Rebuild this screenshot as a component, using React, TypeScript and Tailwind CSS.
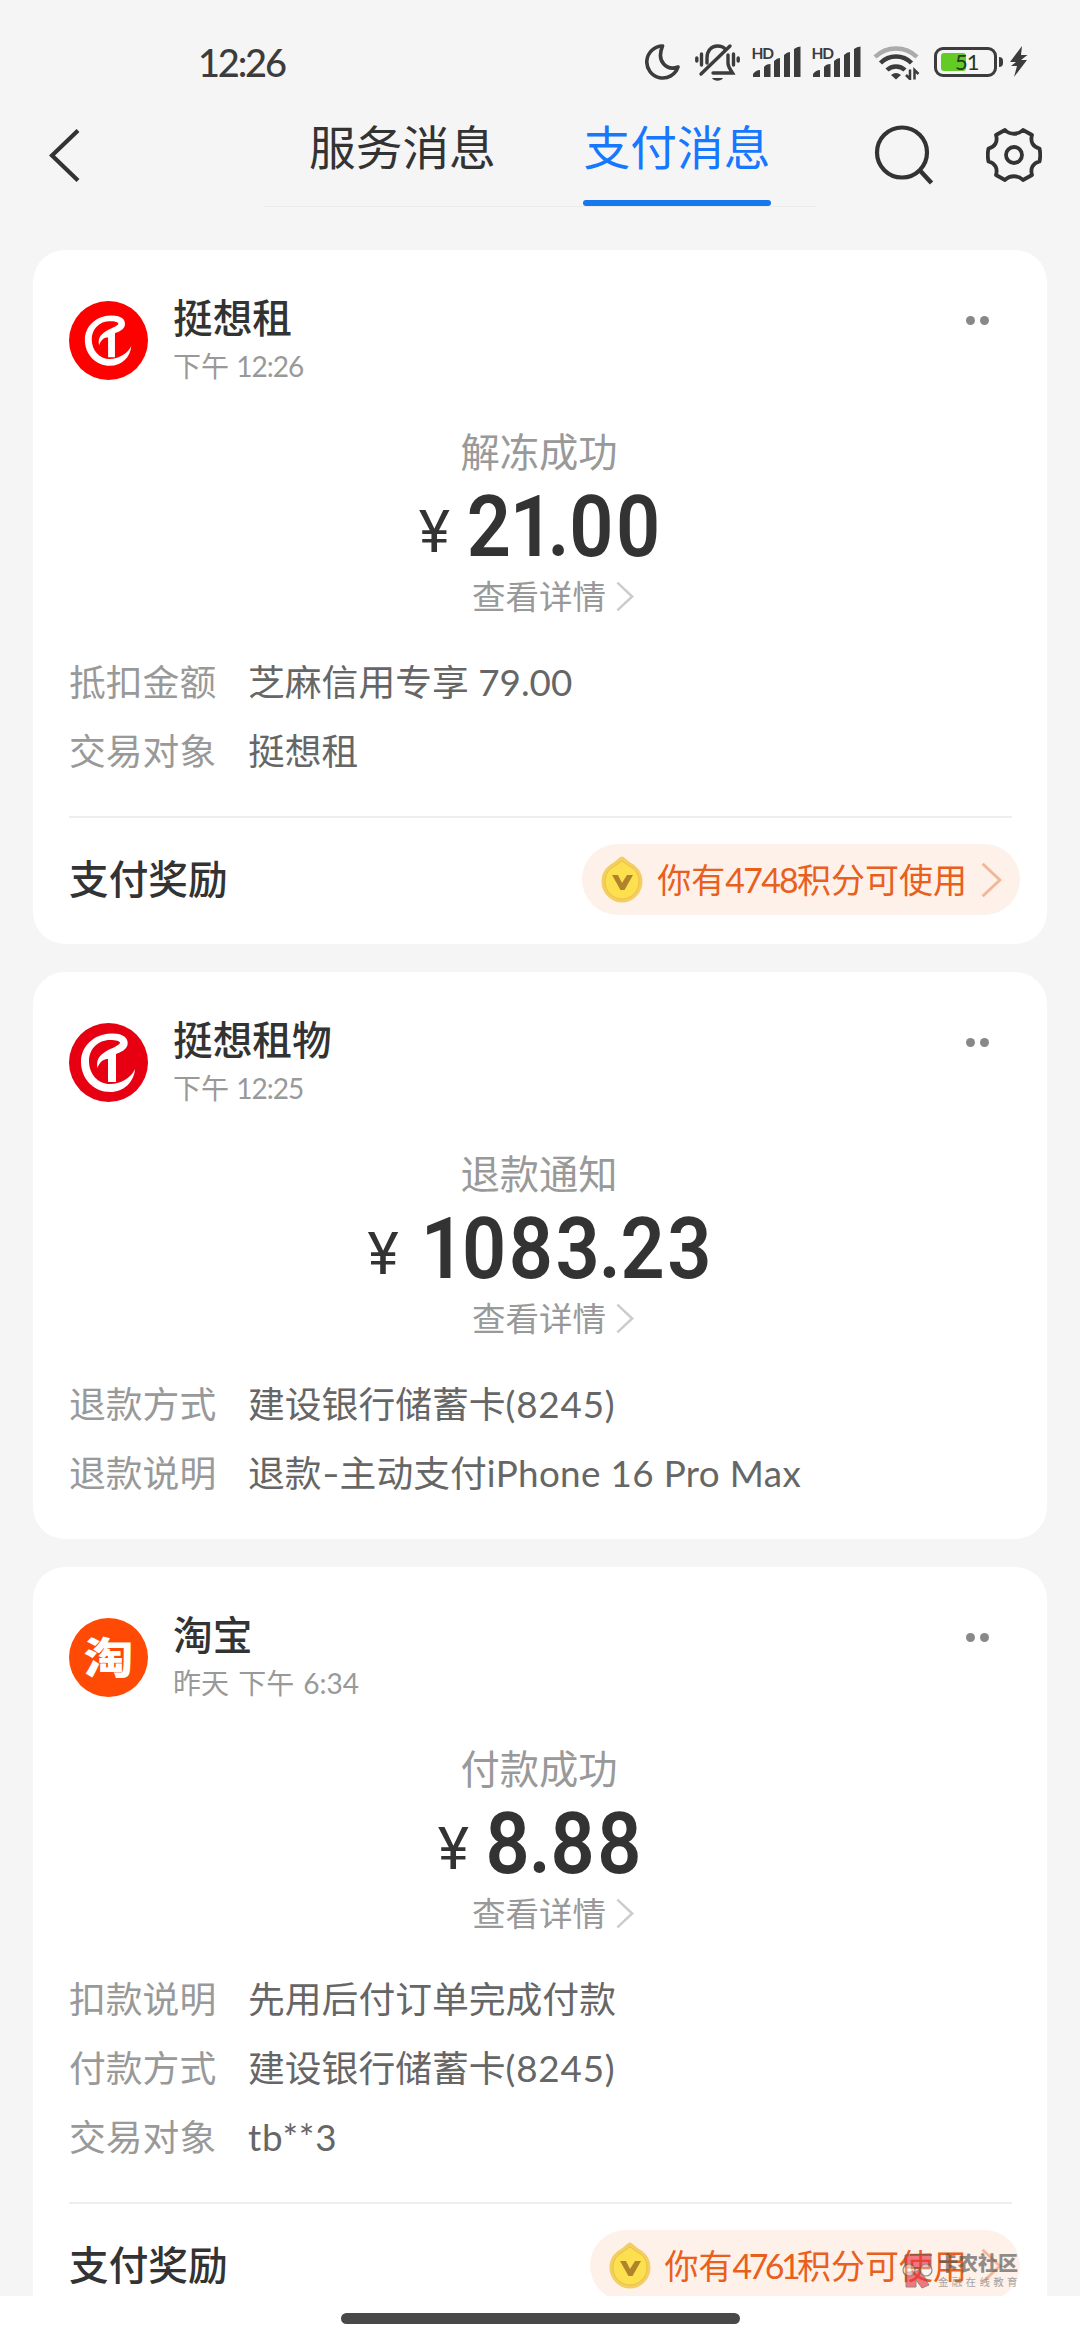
import type { ReactNode } from 'react';

interface Row {
  label: string;
  value: ReactNode;
}

interface Message {
  logo: ReactNode;
  name: string;
  time: ReactNode;
  status: string;
  amount: string;
  rows: Row[];
  points?: ReactNode;
}

function RentLogo({ color, scale = 1 }: { color: string; scale?: number }) {
  return (
    <svg className="size-[79px]" viewBox="0 0 79 79" fill="none">
      <circle cx="39.5" cy="39.5" r="39.5" fill={color} />
      <g transform={`translate(39.5 39.5) scale(${scale}) translate(-39.5 -39.5)`}>
        <path
          d="M66 46C62 55 51 61 41 61C29 61 20 51 20 38C20 26 29 17 41 17C47 17 51 18 51 20C50 23 42 25 36 29C30 33 27 37 28.5 45C31 38 35 36 39 36V59H47V31C52 29 57 27 58.5 22C60 15 54 10 42 10.5C25 11 12 23 12 39C12 56 25 69 41 69C55 69 65 59 66 46Z"
          fill="#fff"
        />
      </g>
    </svg>
  );
}

function TaoLogo() {
  return (
    <div className="flex size-[79px] items-center justify-center rounded-full bg-[#ff4a05]">
      <span className="scale-x-115 text-[43px] leading-none font-black text-white">淘</span>
    </div>
  );
}

function Chevron({ className }: { className: string }) {
  return (
    <svg className={className} viewBox="0 0 20 34" fill="none" stroke="currentColor" strokeWidth="2.8">
      <path d="M1.5 1.5L18 17L1.5 32.5" />
    </svg>
  );
}

function Coin() {
  return (
    <svg className="h-[47px] w-[42px]" viewBox="0 0 42 47" fill="none">
      <path d="M21 0.5C23 0.5 25 3.5 30 7C37 11 41.5 17 41.5 25.5A20.5 21 0 0 1 0.5 25.5C0.5 17 5 11 12 7C17 3.5 19 0.5 21 0.5Z" fill="#f1cf62" />
      <path d="M21 5C23 6 26 9 30 11C35 14 38 19 38 25.5A17 17.5 0 0 1 4 25.5C4 19 7 14 12 11C16 9 19 6 21 5Z" fill="#fde04f" stroke="#f3bd45" />
      <path d="M11 19H17L21 27L26 19H32L23.5 34H19.5Z" fill="#b0822a" />
    </svg>
  );
}

function Signal() {
  return (
    <svg className="h-[34px] w-[50px]" viewBox="0 0 50 34" fill="#3c3c3c">
      <text x="0.5" y="13.5" fontSize="15.5" fontWeight="700" textLength="22.5" fontFamily="Lato">HD</text>
      <path d="M2 32V29Q5 25 9 25V32ZM13 32V22Q15 19 19.5 19V32ZM23 32V16Q26 13 29 13V32ZM33 32V10Q36 7 39 7V32ZM43 32V4Q46 1.5 49.5 1.5V32Z" />
    </svg>
  );
}

function StatusBar() {
  return (
    <div className="mb-0.5 flex h-[123px] items-center justify-between pr-[52px] pl-[198px]">
      <span className="font-[Lato] text-[38px] leading-none font-medium tracking-[-2.2px] text-[#3c3c3c]">12:26</span>
      <div className="flex items-center">
        <svg className="h-9 w-[35px]" viewBox="0 0 35 36" fill="none" stroke="#3c3c3c" strokeWidth="3.6" strokeLinejoin="round">
          <path d="M17.5 2A16 16 0 1 0 33 23C22 27 11 18 17.5 2Z" />
        </svg>
        <svg className="ml-[15px] h-[38px] w-[45px]" viewBox="0 0 45 38" fill="none" stroke="#3c3c3c" strokeWidth="3.4" strokeLinecap="round">
          <path d="M1.8 15V18M6.5 11V22M38.5 11V22M43.2 15V18" />
          <path d="M12 20V15C12 8 16 3 22.5 3C26 3 28.5 4 30 6M33 12V20C33 24 35 26 37.5 30H18M6 31L35 3" />
          <path d="M17 35H28C26 38.5 19 38.5 17 35Z" fill="#3c3c3c" stroke="none" />
        </svg>
        <div className="ml-[11px] flex gap-2.5">
          <Signal />
          <Signal />
        </div>
        <svg className="ml-3 h-[36px] w-[47px]" viewBox="0 0 47 36" fill="none" stroke="#3c3c3c" strokeWidth="4.5">
          <path d="M2 13A30 30 0 0 1 44 13" stroke="#ababab" />
          <path d="M7.5 19A22 22 0 0 1 38.5 19" />
          <path d="M14 26A13 13 0 0 1 32 26" />
          <path d="M18 31Q23 27 28 31L23 35.5Z" fill="#3c3c3c" stroke="none" />
          <path d="M37 25.5V35L33 31M41.5 35.5V26L45.5 30" strokeWidth="2.5" />
        </svg>
        <div className="ml-3.5 flex h-[30px] w-[63px] items-center rounded-[9px] border-[3px] border-[#3c3c3c] pl-1">
          <div className="flex h-[18px] w-[25px] items-center rounded-[3px] bg-[#62cb26] pl-[14px]">
            <span className="font-[Lato] text-[22px] leading-none tracking-[-1px] text-[#263a1c]">51</span>
          </div>
        </div>
        <div className="ml-0.5 h-[10px] w-1 rounded-r-md bg-[#3c3c3c]" />
        <svg className="ml-[7px] h-[31px] w-[18px]" viewBox="0 0 18 31" fill="#3c3c3c">
          <path d="M12 0L0 16H6L1 20H7L4 31L17 14H11L17.5 9H11Z" />
        </svg>
      </div>
    </div>
  );
}

function Header() {
  return (
    <header className="h-[250px] shrink-0">
      <StatusBar />
      <div className="flex h-[82px] text-[#333]">
        <svg className="mt-[4px] ml-[49px] h-[53px] w-[31px]" viewBox="0 0 31 53" fill="none" stroke="currentColor" strokeWidth="4.2">
          <path d="M29 1.5L3 26.5L29 51.5" />
        </svg>
        <nav className="ml-[184px] flex h-[82px] w-[552px] border-b border-[#ebebeb] pl-[45px] text-[46.7px]">
          <span className="mr-[86px] w-[188px] leading-[45px]">服务消息</span>
          <div className="flex w-[188px] flex-col items-center justify-between text-[#1677ff]">
            <span className="leading-[45px]">支付消息</span>
            <div className="h-1.5 w-full rounded-full bg-[#1677ee]" />
          </div>
        </nav>
        <svg className="ml-[58px] h-[62px] w-[60px]" viewBox="0 0 60 62" fill="none" stroke="currentColor" strokeWidth="4.2">
          <circle cx="28" cy="27.5" r="25" />
          <path d="M45.5 45L57.5 58" strokeWidth="4.6" />
        </svg>
        <svg className="mt-0.5 ml-[52px] h-[56px] w-[56px]" viewBox="0 0 56 56" fill="none" stroke="currentColor" strokeWidth="3.8" strokeLinejoin="round">
          <path d="M19 3C24 8 32 8 37 3L46 8C44 15 47 20 53.5 21.5C54.5 26 54.5 30 53.5 34.5C47 36 44 41 46 48L37 53C32 48 24 48 19 53L10 48C12 41 9 36 2.5 34.5C1.5 30 1.5 26 2.5 21.5C9 20 12 15 10 8Z" />
          <circle cx="28" cy="28" r="8" />
        </svg>
      </div>
    </header>
  );
}

// digits are tabular in Roboto, so "1" and the point get pulled in by hand
function Amount({ value }: { value: string }) {
  return (
    <div className="mt-1 flex h-[92px] scale-x-90 items-baseline pl-1 font-[Roboto] text-[#333]">
      <span className="relative -top-1 mr-[20px] scale-x-110 text-[60px] leading-[60px]">¥</span>
      <span className="text-[86px] leading-[92px] font-semibold tracking-[2.8px]">
        {value.split('').map((char, i) => {
          if (char === '1') return <span key={i} className="-ml-1 mr-[-6px] first:ml-1.5">1</span>;
          if (char === '.') return <span key={i} className="mr-[-3px] ml-[-4px]">.</span>;
          return <span key={i}>{char}</span>;
        })}
      </span>
    </div>
  );
}

function MessageCard({ logo, name, time, status, amount, rows, points }: Message) {
  return (
    <section className="shrink-0 rounded-[32px] bg-white px-9">
      <div className="flex h-[135px] pt-[51px]">
        {logo}
        <div className="ml-[25px] flex-1">
          <h2 className="-mt-[6px] text-[39.7px] leading-[46px] font-medium text-[#333]">{name}</h2>
          <p className="mt-[5px] text-[28px] leading-[40px] text-[#999]">{time}</p>
        </div>
        <div className="mt-[15px] mr-[22px] flex gap-[5px]">
          <i className="size-[9px] rounded-full bg-[#888]" />
          <i className="size-[9px] rounded-full bg-[#888]" />
        </div>
      </div>
      <div className="mt-[42px] flex flex-col items-center">
        <div className="mr-0.5 text-[39.3px] leading-[50px] text-[#999]">{status}</div>
        <Amount value={amount} />
        <div className="-mt-0.5 flex items-center gap-[10px] pl-[26px] text-[33.5px] leading-[50px] text-[#999]">
          查看详情
          <Chevron className="h-[31px] w-[18px] text-[#ccc]" />
        </div>
      </div>
      <dl className="mt-[27px] pb-[30px] text-[36.8px] last:pb-[31px]">
        {rows.map((row) => (
          <div key={row.label} className="flex h-[69px] items-center">
            <dt className="w-[179px] text-[#999]">{row.label}</dt>
            <dd className="text-[#666]">{row.value}</dd>
          </div>
        ))}
      </dl>
      {points && (
        <div className="mr-[-1px] flex h-[128px] items-start justify-between border-t-2 border-[#eee] pt-[26px]">
          <span className="text-[39.7px] leading-[70px] font-medium text-[#333]">支付奖励</span>
          <div className="mr-[-8px] flex h-[71px] items-center rounded-full bg-[#fef1ea] pr-[18px] pl-[19px]">
            <Coin />
            <span className="ml-[14px] text-[34px] leading-[68px] text-[#e8601c]">
              你有{points}积分可使用
            </span>
            <Chevron className="ml-[14px] h-[36px] w-[21px] text-[#f3b797]" />
          </div>
        </div>
      )}
    </section>
  );
}

const bankCard = (
  <>
    建设银行储蓄卡<span className="tracking-[0.8px]">(8245)</span>
  </>
);

const messages: Message[] = [
  {
    logo: <RentLogo color="#fe0000" scale={0.86} />,
    name: '挺想租',
    time: <>下午 <span className="tracking-[-1px]">12:26</span></>,
    status: '解冻成功',
    amount: '21.00',
    rows: [
      { label: '抵扣金额', value: '芝麻信用专享 79.00' },
      { label: '交易对象', value: '挺想租' },
    ],
    points: <span className="tracking-[-1.8px]">4748</span>,
  },
  {
    logo: <RentLogo color="#e60012" />,
    name: '挺想租物',
    time: <>下午 <span className="tracking-[-1px]">12:25</span></>,
    status: '退款通知',
    amount: '1083.23',
    rows: [
      { label: '退款方式', value: bankCard },
      {
        label: '退款说明',
        value: (
          <>
            退款<span className="inline-block w-[18px] origin-left scale-x-130">-</span>主动支付
            <span className="tracking-[0.35px]">iPhone 16 Pro Max</span>
          </>
        ),
      },
    ],
  },
  {
    logo: <TaoLogo />,
    name: '淘宝',
    time: <span className="[word-spacing:2px]">昨天 下午 6:34</span>,
    status: '付款成功',
    amount: '8.88',
    rows: [
      { label: '扣款说明', value: '先用后付订单完成付款' },
      { label: '付款方式', value: bankCard },
      { label: '交易对象', value: <span className="tracking-[0.8px]">tb**3</span> },
    ],
    points: <span className="tracking-[-3.6px]">4761</span>,
  },
];

function Watermark() {
  return (
    <div className="absolute top-[2251px] left-[900px] flex gap-1 opacity-65">
      <svg className="h-[40px] w-[34px]" viewBox="0 0 34 40" fill="#ec3346" stroke="#555" strokeWidth="1">
        <path d="M5 4L31 3V17H5ZM6 21H15L20 18L29 34L22 37L16 29V36H6Z" />
        <g fill="#fff" fillOpacity="0.5" strokeWidth="1.2">
          <circle cx="9" cy="19" r="6" />
          <circle cx="26" cy="19" r="6" />
        </g>
      </svg>
      <div className="flex flex-col">
        <span className="text-[20px] leading-[25px] font-black text-[#555]">卡农社区</span>
        <span className="text-[10.5px] leading-[13px] tracking-[3.3px] text-[#777]">金融在线教育</span>
      </div>
    </div>
  );
}

function App() {
  return (
    <div className="relative flex h-[2340px] w-[1080px] flex-col overflow-hidden bg-[#f5f5f5] font-['Lato','Noto_Sans_CJK_SC',sans-serif]">
      <Header />
      <main className="flex h-[2046px] flex-col gap-[28px] overflow-hidden px-[33px]">
        {messages.map((message) => (
          <MessageCard key={message.name} {...message} />
        ))}
      </main>
      <footer className="flex h-11 shrink-0 justify-center bg-white pt-[17px]">
        <div className="h-[11px] w-[399px] rounded-full bg-[#484848]" />
      </footer>
      <Watermark />
    </div>
  );
}

export default App;
